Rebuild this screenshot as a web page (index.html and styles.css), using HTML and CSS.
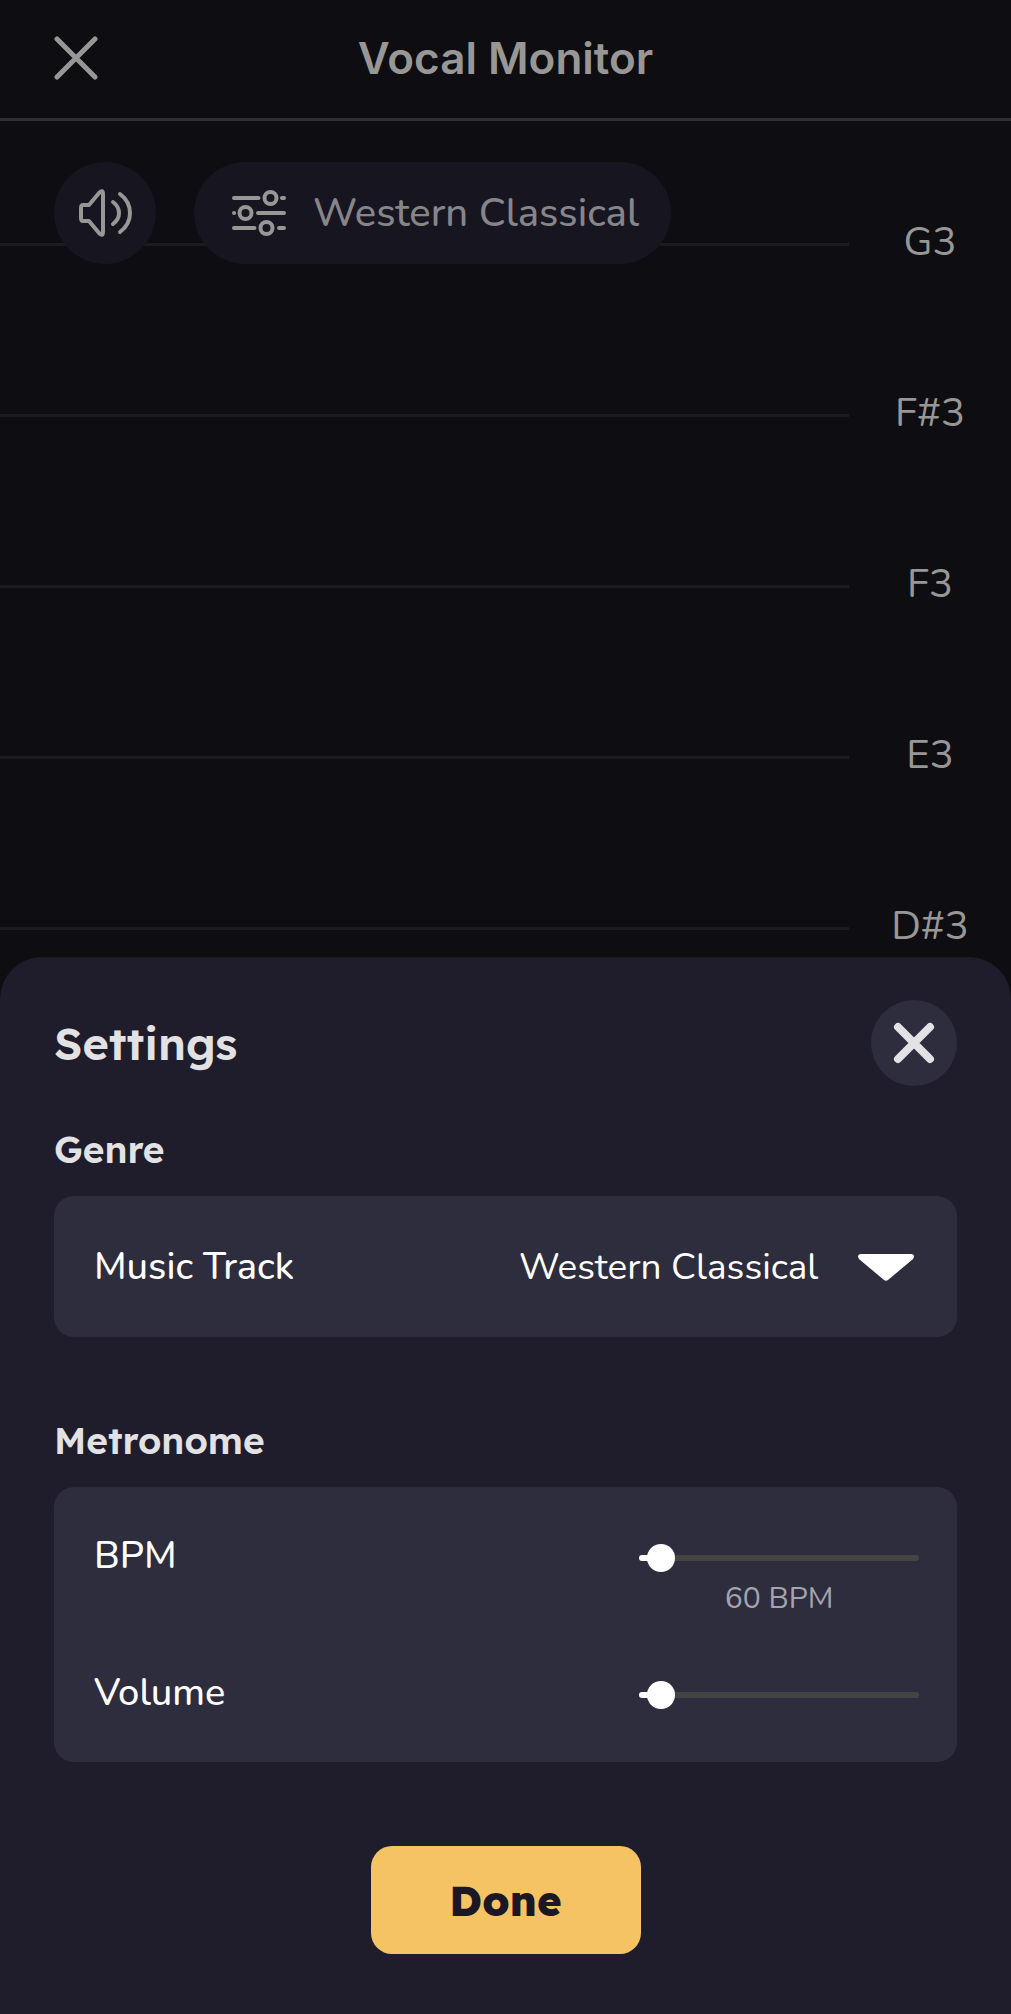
FILE: index.html
```html
<!DOCTYPE html>
<html lang="en">
<head>
  <meta charset="UTF-8" />
  <meta name="viewport" content="width=device-width, initial-scale=1.0" />
  <title>Vocal Monitor</title>
  <link rel="stylesheet" href="styles.css">
</head>
<body>
  <header class="topbar">
    <button class="icon-btn" type="button" aria-label="Close">
      <svg width="44" height="44" viewBox="0 0 44 44" fill="none" stroke="currentColor" stroke-width="5" stroke-linecap="round">
        <path d="M3 3l38 38M41 3L3 41" />
      </svg>
    </button>
    <h1 class="title">Vocal Monitor</h1>
  </header>

  <main class="chart">
    <div class="toolbar">
      <button class="pill round" type="button" aria-label="Sound">
        <svg width="54" height="48" viewBox="0 0 54 48" fill="none" stroke="currentColor" stroke-width="4" stroke-linecap="round" stroke-linejoin="round">
          <path d="M5 16h6L21 4Q25 0 25 5v38q0 5-4 1L11 32H5q-2 0-2-3V19q0-3 2-3z" />
          <path d="M35 13q6 4.500 6 11t-6 11" />
          <path d="M42 5q10 7.500 10 19t-10 19" />
        </svg>
      </button>
      <button class="pill" type="button">
        <svg width="54" height="48" viewBox="0 0 54 48" fill="none" stroke="currentColor" stroke-width="4" stroke-linecap="round">
          <path d="M2 9h24.500M50 9H52M2 24h.1M26 24H52M2 39h20.500M47 39H52" />
          <circle cx="38.500" cy="9" r="6" />
          <circle cx="13.500" cy="24" r="6" />
          <circle cx="34.500" cy="39" r="6" />
        </svg>
        <span>Western Classical</span>
      </button>
    </div>

    <div class="note"><span class="line"></span><span class="name">G3</span></div>
    <div class="note"><span class="line"></span><span class="name">F#3</span></div>
    <div class="note"><span class="line"></span><span class="name">F3</span></div>
    <div class="note"><span class="line"></span><span class="name">E3</span></div>
    <div class="note"><span class="line"></span><span class="name">D#3</span></div>
  </main>

  <section class="sheet">
    <div class="sheet-header">
      <h2>Settings</h2>
      <button class="close-btn" type="button" aria-label="Close settings">
        <svg width="42" height="42" viewBox="0 0 42 42" fill="none" stroke="currentColor" stroke-width="8" stroke-linecap="round">
          <path d="M5 5l32 32M37 5L5 37" />
        </svg>
      </button>
    </div>

    <h3>Genre</h3>
    <div class="card">
      <div class="row">
        <label for="track">Music Track</label>
        <div class="select-wrap">
          <select id="track">
            <option>Western Classical</option>
          </select>
          <svg width="62" height="28" viewBox="0 0 62 28" fill="currentColor">
            <path d="M4 1h50q3 0 3 2.500 0 1.500-1.500 3L31 27Q29 28.500 27 27L2.500 6.500Q1 5 1 3.500 1 1 4 1z" />
          </svg>
        </div>
      </div>
    </div>

    <h3>Metronome</h3>
    <div class="card metronome">
      <div class="row">
        <label for="bpm">BPM</label>
        <div class="slider">
          <input type="range" id="bpm" min="50" max="350" value="60" />
          <output class="value" for="bpm">60 BPM</output>
        </div>
      </div>
      <div class="row">
        <label for="volume">Volume</label>
        <div class="slider">
          <input type="range" id="volume" min="0" max="100" value="3" />
        </div>
      </div>
    </div>

    <button class="done-btn" type="button">Done</button>
  </section>
</body>
</html>
```
FILE: styles.css
```css
/* Reset and fonts */
* {
  box-sizing: border-box;
  margin: 0;
  padding: 0;
}
body {
  display: flex;
  flex-direction: column;
  min-height: 100vh;
  font-family: Nunito, Lato, sans-serif;
  background: #0e0d12;
  color: #989796;
}
button,
select {
  border: none;
  font-family: inherit;
  color: inherit;
  cursor: pointer;
}
svg {
  display: block;
  flex: none;
}

/* Top bar */
.topbar {
  display: grid;
  grid-template-columns: 44px 1fr 44px;
  align-items: center;
  height: 121px;
  padding: 0 54px 2px;
  border-bottom: 3px solid #302f36;
}
.icon-btn {
  background: none;
}
.title {
  font-family: Inter, sans-serif;
  font-size: 44px;
  font-weight: 600;
  text-align: center;
}

/* Pitch chart */
.chart {
  position: relative;
  padding-top: 38px;
}
.toolbar {
  position: absolute;
  top: 41px;
  left: 54px;
  display: flex;
  gap: 38px;
}
.pill {
  display: flex;
  align-items: center;
  gap: 27px;
  height: 102px;
  padding: 0 32px 0 38px;
  border-radius: 51px;
  background: #171520;
  font-size: 40px;
  font-weight: 500;
  color: #868589;
}
.pill svg {
  color: #989796;
}
.pill.round {
  padding: 0 24px;
}
.note {
  display: flex;
  align-items: center;
  height: 171px;
}
.line {
  flex: 1;
  height: 3px;
  background: #1c1b20;
}
.name {
  width: 162px;
  padding-bottom: 6px;
  font-size: 40px;
  text-align: center;
}

/* Settings sheet, slides over the last note */
.sheet {
  position: relative;
  flex: 1;
  margin-top: -57px;
  padding: 43px 54px 60px;
  border-radius: 42px 42px 0 0;
  background: #1f1c2b;
  color: #fff;
}
.sheet-header {
  display: flex;
  align-items: center;
  justify-content: space-between;
  height: 86px;
}
h2,
h3 {
  font-family: Lexend, "Lexend Deca", Outfit, Nunito, Lato, sans-serif;
  font-weight: 600;
  color: #e2e1e3;
}
h2 {
  font-size: 45px;
}
.close-btn {
  display: flex;
  align-items: center;
  justify-content: center;
  width: 86px;
  height: 86px;
  border-radius: 50%;
  background: #2e2d3e;
  color: #e2e1e3;
}
h3 {
  margin: 40px 0 24px;
  font-size: 37px;
  line-height: 46px;
}
.card {
  border-radius: 20px;
  background: #2e2d3e;
}
.card + h3 {
  margin-top: 80px;
}
.row {
  display: flex;
  align-items: center;
  justify-content: space-between;
  height: 141px;
  padding: 0 38px 0 40px;
  font-size: 38px;
}
.row label {
  font-weight: 500;
}
.metronome {
  padding-bottom: 1px;
}
.metronome .row {
  height: 137px;
}
.select-wrap {
  display: flex;
  align-items: center;
  gap: 38px;
}
select {
  appearance: none;
  background: none;
  font-size: 37px;
}

/* Sliders */
.slider {
  position: relative;
  width: 280px;
  padding-top: 4px;
}
input[type="range"] {
  appearance: none;
  display: block;
  width: 100%;
  height: 28px;
  background: none;
  cursor: pointer;
}
input[type="range"]::-webkit-slider-runnable-track {
  height: 6px;
  border-radius: 3px;
  background: linear-gradient(to right, #fff 16px, #444443 16px);
}
input[type="range"]::-webkit-slider-thumb {
  appearance: none;
  width: 28px;
  height: 28px;
  margin-top: -11px;
  border-radius: 50%;
  background: #fff;
}
.value {
  position: absolute;
  top: 100%;
  left: 0;
  width: 100%;
  padding-top: 6px;
  font-size: 30px;
  text-align: center;
  color: #a5a3ac;
}

.done-btn {
  display: block;
  width: 270px;
  height: 108px;
  margin: 84px auto 0;
  border-radius: 21px;
  background: #f5c363;
  color: #1b1724;
  font-family: Lexend, "Lexend Deca", Outfit, Nunito, Lato, sans-serif;
  font-size: 42px;
  font-weight: 800;
}
```
